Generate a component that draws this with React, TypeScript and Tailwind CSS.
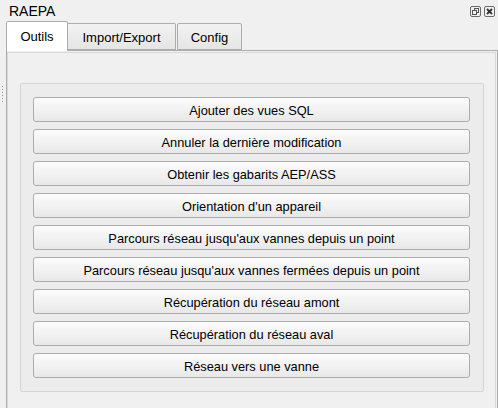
import React from "react";

const buttons = [
  "Ajouter des vues SQL",
  "Annuler la dernière modification",
  "Obtenir les gabarits AEP/ASS",
  "Orientation d'un appareil",
  "Parcours réseau jusqu'aux vannes depuis un point",
  "Parcours réseau jusqu'aux vannes fermées depuis un point",
  "Récupération du réseau amont",
  "Récupération du réseau aval",
  "Réseau vers une vanne",
];

export default function App() {
  return (
    <div
      className="relative w-[498px] h-[408px] overflow-hidden bg-[#f0f0f0] text-[#000]"
      style={{ fontFamily: '"Liberation Sans", Arial, sans-serif' }}
    >
      {/* dock handle dots */}
      <div className="absolute left-[2px] top-[86px] flex flex-col gap-[2px]">
        {Array.from({ length: 6 }).map((_, i) => (
          <div key={i} className="w-[1px] h-[1px] bg-[#9a9a9a]" />
        ))}
      </div>

      {/* title bar */}
      <div className="h-[21px] flex items-start justify-between">
        <div className="pl-[9px] pt-[3px] text-[14px] leading-[16px]">RAEPA</div>
        <div className="flex gap-[3px] pt-[6px] pr-[3px]">
          <svg width="11" height="11" viewBox="0 0 11 11">
            <rect x="0.5" y="0.5" width="10" height="10" rx="1.5" fill="none" stroke="#6b6b6b" />
            <rect x="4.5" y="2.5" width="4" height="4" fill="none" stroke="#555" />
            <rect x="2.5" y="4.5" width="4" height="4" fill="#f0f0f0" stroke="#555" />
          </svg>
          <svg width="11" height="11" viewBox="0 0 11 11">
            <rect x="0.5" y="0.5" width="10" height="10" rx="1.5" fill="none" stroke="#6b6b6b" />
            <path d="M3 3 L8 8 M8 3 L3 8" stroke="#333" strokeWidth="1.8" />
          </svg>
        </div>
      </div>

      {/* tabs */}
      <div className="flex items-end pl-[6px] h-[29px] text-[13px] relative z-10">
        <div className="w-[62px] h-[30px] -mb-[1px] bg-white border border-b-0 border-[#adadad] rounded-t-[2px] flex items-center justify-center pt-[1px]">
          Outils
        </div>
        <div className="w-[108px] h-[27px] bg-gradient-to-b from-[#f2f2f2] to-[#e5e5e5] border border-[#adadad] border-l-0 rounded-tr-[2px] flex items-center justify-center pt-[2px]">
          Import/Export
        </div>
        <div className="w-[65px] h-[27px] ml-[1px] bg-gradient-to-b from-[#f2f2f2] to-[#e5e5e5] border border-[#adadad] rounded-t-[2px] flex items-center justify-center pt-[2px]">
          Config
        </div>
      </div>

      {/* pane */}
      <div className="ml-[6px] h-[400px] border border-b-0 border-[#adadad] pt-[1px] pr-[1px]">
        <div className="h-full border border-b-0 border-[#d9d9d9] pt-[30px] pl-[12px]">
          <div className="w-[464px] h-[309px] border border-[#d5d5d5] rounded-[2px] bg-[#ececec] pl-[12px] pt-[13px] flex flex-col gap-[7px] text-[12.8px]">
            {buttons.map((b) => (
              <div
                key={b}
                className="w-[437px] h-[25px] shrink-0 border border-[#adadad] rounded-[3px] bg-gradient-to-b from-[#fcfcfc] to-[#e8e8e8] flex items-center justify-center pt-[2px]"
              >
                {b}
              </div>
            ))}
          </div>
        </div>
      </div>
    </div>
  );
}
